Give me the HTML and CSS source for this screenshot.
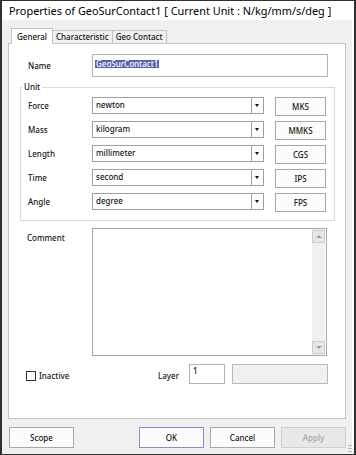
FILE: index.html
```html
<!DOCTYPE html>
<html lang="en">
<head>
  <meta charset="UTF-8">
  <meta name="viewport" content="width=device-width, initial-scale=1.0">
  <title>Properties of GeoSurContact1</title>
  <link rel="stylesheet" href="styles.css">
</head>
<body>
  <div class="window">
    <div class="titlebar">Properties of GeoSurContact1 [ Current Unit : N/kg/mm/s/deg ]</div>

    <div class="client">
      <div class="tabs">
        <div class="tab active">General</div>
        <div class="tab">Characteristic</div>
        <div class="tab">Geo Contact</div>
      </div>

      <div class="panel">
        <div class="name-row">
          <span class="label">Name</span>
          <div class="textbox name-box"><span class="sel">GeoSurContact1</span></div>
        </div>

        <fieldset class="group">
          <legend>Unit</legend>
          <div class="unit-rows">
            <div class="unit-row">
              <span class="label">Force</span>
              <div class="combo"><span class="combo-text">newton</span><span class="combo-arrow"></span></div>
              <button class="btn unit-btn">MKS</button>
            </div>
            <div class="unit-row">
              <span class="label">Mass</span>
              <div class="combo"><span class="combo-text">kilogram</span><span class="combo-arrow"></span></div>
              <button class="btn unit-btn">MMKS</button>
            </div>
            <div class="unit-row">
              <span class="label">Length</span>
              <div class="combo"><span class="combo-text">millimeter</span><span class="combo-arrow"></span></div>
              <button class="btn unit-btn">CGS</button>
            </div>
            <div class="unit-row">
              <span class="label">Time</span>
              <div class="combo"><span class="combo-text">second</span><span class="combo-arrow"></span></div>
              <button class="btn unit-btn">IPS</button>
            </div>
            <div class="unit-row">
              <span class="label">Angle</span>
              <div class="combo"><span class="combo-text">degree</span><span class="combo-arrow"></span></div>
              <button class="btn unit-btn">FPS</button>
            </div>
          </div>
        </fieldset>

        <div class="comment-row">
          <span class="label comment-label">Comment</span>
          <div class="memo">
            <div class="memo-text"></div>
            <div class="vscroll">
              <span class="sb-btn"><span class="sb-up"></span></span>
              <span class="sb-track"></span>
              <span class="sb-btn"><span class="sb-down"></span></span>
            </div>
          </div>
        </div>

        <div class="bottom-row">
          <div class="check"><span class="box"></span>Inactive</div>
          <span class="label layer-label">Layer</span>
          <div class="textbox layer-box">1</div>
          <div class="textbox disabled-box"></div>
        </div>
      </div>

      <div class="footer">
        <button class="btn foot-btn scope-btn">Scope</button>
        <div class="spacer"></div>
        <button class="btn foot-btn default">OK</button>
        <button class="btn foot-btn">Cancel</button>
        <button class="btn foot-btn" disabled>Apply</button>
      </div>

      <div class="grip"></div>
    </div>
  </div>
</body>
</html>
```

FILE: styles.css
```css
* {
  box-sizing: border-box;
}
body {
  margin: 0;
  font-family: "Noto Sans", "Liberation Sans", sans-serif;
  font-size: 8px;
  font-weight: 500;
  color: #141414;
}
.window {
  width: 356px;
  height: 455px;
  border: 1px solid #303030;
  border-left-width: 2px;
  border-right-width: 2px;
  background: #fff;
  display: flex;
  flex-direction: column;
}
.titlebar {
  height: 19px;
  line-height: 20px;
  padding-left: 7px;
  font-size: 10.9px;
  font-weight: 400;
  color: #000;
  white-space: nowrap;
}
.client {
  position: relative;
  flex: 1;
  margin-right: 2px;
  background: #f0f0f0;
  padding: 8px 6px 0 6px;
}

/* tabs */
.tabs {
  position: relative;
  z-index: 1;
  display: flex;
  align-items: flex-end;
  height: 16px;
  padding-left: 3px;
  margin-bottom: -1px;
}
.tab {
  height: 14px;
  line-height: 12px;
  padding: 0 3px;
  background: #f0f0f0;
  border: 1px solid #c4c4c4;
  border-left-width: 0;
  white-space: nowrap;
}
.tab.active {
  height: 16px;
  line-height: 15px;
  padding: 0 5px;
  background: #fff;
  border-left-width: 1px;
  border-bottom: none;
}

/* panel */
.panel {
  width: 338px;
  height: 376px;
  background: #fff;
  border: 1px solid #c4c4c4;
  padding: 10px 10px 0 11px;
}
.label {
  width: 64px;
  flex-shrink: 0;
  white-space: nowrap;
}
.textbox {
  background: #fff;
  border: 1px solid #b4b4b4;
}
.name-row {
  display: flex;
  align-items: center;
  height: 23px;
  padding-left: 8px;
}
.name-box {
  width: 236px;
  height: 23px;
  padding: 3px 0 0 2px;
}
.sel {
  display: inline-block;
  height: 8px;
  line-height: 8px;
  padding: 0 1px;
  background: #5d60b2;
  color: #fff;
}

/* unit group */
.group {
  margin: 5px 0 0 0;
  padding: 0 0 8px 0;
  border: 1px solid #d9d9d9;
  min-width: 0;
}
.group legend {
  margin-left: 1px;
  padding: 0 2px;
  line-height: 10px;
}
.unit-rows {
  display: flex;
  flex-direction: column;
  gap: 5px;
  padding: 5px 7px 0 7px;
}
.unit-row {
  display: flex;
  align-items: flex-start;
  height: 19px;
}
.unit-row .label {
  line-height: 17px;
}
.combo {
  display: flex;
  width: 172px;
  height: 17px;
  background: #fff;
  border: 1px solid #a0a0a0;
}
.combo-text {
  flex: 1;
  padding-left: 3px;
  line-height: 14px;
}
.combo-arrow {
  position: relative;
  width: 12px;
  border-left: 1px solid #a0a0a0;
}
.combo-arrow::after {
  content: "";
  position: absolute;
  left: 3px;
  top: 6px;
  border-left: 2.5px solid transparent;
  border-right: 2.5px solid transparent;
  border-top: 3px solid #111;
}
.btn {
  font: inherit;
  color: #141414;
  background: #fcfcfc;
  border: 1px solid #a8a8a8;
  padding: 0;
  border-radius: 0;
}
.unit-btn {
  width: 51px;
  height: 19px;
  margin-left: 11px;
}

/* comment */
.comment-row {
  display: flex;
  margin-top: 7px;
  padding-left: 7px;
}
.comment-label {
  width: 65px;
  padding-top: 5px;
  line-height: 10px;
}
.memo {
  display: flex;
  width: 235px;
  height: 128px;
  background: #fff;
  border: 1px solid #a8a8a8;
}
.memo-text {
  flex: 1;
}
.vscroll {
  display: flex;
  flex-direction: column;
  width: 13px;
  margin-right: 1px;
  padding: 1px 0;
  background: #f0f0f0;
}
.sb-btn {
  position: relative;
  height: 13px;
  background: #e6e6e6;
  border: 1px solid #cdcdcd;
}
.sb-track {
  flex: 1;
}
.sb-up,
.sb-down {
  position: absolute;
  left: 3px;
  top: 4px;
  border-left: 3px solid transparent;
  border-right: 3px solid transparent;
}
.sb-up {
  border-bottom: 3px solid #9a9a9a;
}
.sb-down {
  border-top: 3px solid #9a9a9a;
}

/* bottom row */
.bottom-row {
  display: flex;
  align-items: center;
  height: 20px;
  margin-top: 8px;
  padding-left: 6px;
}
.check {
  display: flex;
  align-items: center;
  width: 132px;
  gap: 3px;
  padding-top: 3px;
}
.check .box {
  width: 10px;
  height: 10px;
  border: 1px solid #333;
  background: #fff;
}
.layer-label {
  width: 31px;
  padding-top: 2px;
}
.layer-box {
  width: 36px;
  height: 20px;
  padding: 1px 0 0 3px;
  line-height: 10px;
}
.disabled-box {
  width: 96px;
  height: 20px;
  margin-left: 7px;
  background: #f0f0f0;
  border-color: #b8b8b8;
}

/* footer */
.footer {
  display: flex;
  gap: 6px;
  margin-top: 8px;
}
.spacer {
  flex: 1;
}
.foot-btn {
  width: 65px;
  height: 21px;
}
.scope-btn {
  margin-left: 1px;
}
.foot-btn.default {
  border-color: #9a80d9;
}
.foot-btn:disabled {
  background: #e8e8e8;
  border-color: #cfcfcf;
  color: #a6a6a6;
}
.grip {
  position: absolute;
  right: 0;
  bottom: 1px;
  width: 4px;
  height: 9px;
  background-image: radial-gradient(circle, #b5b5b5 45%, transparent 50%);
  background-size: 2px 3px;
}
```
